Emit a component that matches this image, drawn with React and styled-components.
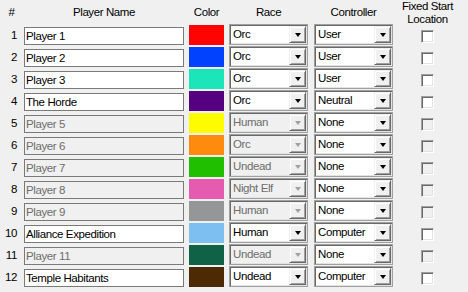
import React from "react";
import styled, { createGlobalStyle, css } from "styled-components";

const Global = createGlobalStyle`
  html, body { margin: 0; padding: 0; background: #f0f0f0; }
  body {
    font-family: "Liberation Sans", Arial, sans-serif;
    font-size: 11.5px;
    letter-spacing: -0.4px;
    color: #000;
  }
`;

const players = [
  { name: "Player 1", color: "#ff0303", race: "Orc", ctrl: "User", on: true },
  { name: "Player 2", color: "#0042ff", race: "Orc", ctrl: "User", on: true },
  { name: "Player 3", color: "#1ce6b9", race: "Orc", ctrl: "User", on: true },
  { name: "The Horde", color: "#540081", race: "Orc", ctrl: "Neutral", on: true },
  { name: "Player 5", color: "#fffc00", race: "Human", ctrl: "None", on: false },
  { name: "Player 6", color: "#fe8a0e", race: "Orc", ctrl: "None", on: false },
  { name: "Player 7", color: "#20c000", race: "Undead", ctrl: "None", on: false },
  { name: "Player 8", color: "#e55bb0", race: "Night Elf", ctrl: "None", on: false },
  { name: "Player 9", color: "#959697", race: "Human", ctrl: "None", on: false },
  { name: "Alliance Expedition", color: "#7ebff1", race: "Human", ctrl: "Computer", on: true },
  { name: "Player 11", color: "#106246", race: "Undead", ctrl: "None", on: false },
  { name: "Temple Habitants", color: "#4e2a04", race: "Undead", ctrl: "Computer", on: true },
];

const Panel = styled.div`
  width: 468px;
  height: 292px;
  display: flex;
  flex-direction: column;
  background: #f0f0f0;
`;

const grid = css`
  display: grid;
  grid-template-columns: 24px 165px 40px 85px 85px 57px;
`;

const HeaderRow = styled.div`
  ${grid};
  height: 24px;
  line-height: 13px;
`;

const HeadCell = styled.div`
  padding-top: ${(p) => (p.$twoLine ? 0 : 6)}px;
  text-align: center;
  width: ${(p) => p.$w}px;
  white-space: nowrap;
`;

const Row = styled.div`
  ${grid};
  height: 22px;
  align-items: start;
`;

const Num = styled.div`
  padding-right: 7px;
  text-align: right;
  line-height: 18px;
  margin-top: 2px;
`;

const TextBox = styled.div`
  box-sizing: border-box;
  width: 160px;
  height: 18px;
  margin-top: 3px;
  border: 1px solid #7a7a7a;
  background: ${(p) => (p.$on ? "#fff" : "#f0f0f0")};
  color: ${(p) => (p.$on ? "#000" : "#6d6d6d")};
  padding-left: 1px;
  line-height: 16px;
  white-space: nowrap;
  overflow: hidden;
`;

const Swatch = styled.div`
  width: 35px;
  height: 20px;
  margin-top: 1px;
`;

const Combo = styled.div`
  box-sizing: border-box;
  width: 79px;
  height: 21px;
  display: flex;
  align-items: center;
  border: 1px solid #a0a0a0;
  box-shadow: inset 1px 1px 0 #696969, inset -1px -1px 0 #e3e3e3;
  background: ${(p) => (p.$on ? "#fff" : "#f0f0f0")};
  color: ${(p) => (p.$on ? "#000" : "#6d6d6d")};
  padding: 1px;
`;

const ComboText = styled.div`
  flex: 1;
  padding-left: 2px;
  line-height: 17px;
  white-space: nowrap;
  overflow: hidden;
`;

const DropButton = styled.div`
  box-sizing: border-box;
  width: 17px;
  height: 17px;
  background: #f0f0f0;
  border-style: solid;
  border-width: 1px;
  border-color: #f0f0f0 #696969 #696969 #f0f0f0;
  box-shadow: inset 1px 1px 0 #fff, inset -1px -1px 0 #a0a0a0;
  display: flex;
  align-items: center;
  justify-content: center;
`;

const Arrow = styled.div`
  width: 0;
  height: 0;
  border-left: 3.5px solid transparent;
  border-right: 3.5px solid transparent;
  border-top: 4px solid ${(p) => (p.$on ? "#000" : "#a0a0a0")};
`;

const CheckCell = styled.div`
  display: flex;
  justify-content: center;
  padding-top: 6px;
`;

const CheckBox = styled.div`
  box-sizing: border-box;
  width: 13px;
  height: 13px;
  border-style: solid;
  border-width: 1px;
  border-color: #a0a0a0 #fff #fff #a0a0a0;
  box-shadow: inset 1px 1px 0 #696969, inset -1px -1px 0 #e3e3e3;
  background: ${(p) => (p.$on ? "#fff" : "#f0f0f0")};
`;

function ComboBox({ value, on }) {
  return (
    <Combo $on={on}>
      <ComboText>{value}</ComboText>
      <DropButton>
        <Arrow $on={on} />
      </DropButton>
    </Combo>
  );
}

export default function App() {
  return (
    <>
      <Global />
      <Panel>
        <HeaderRow>
          <HeadCell $w={23}>#</HeadCell>
          <HeadCell $w={160}>Player Name</HeadCell>
          <HeadCell $w={35}>Color</HeadCell>
          <HeadCell $w={79}>Race</HeadCell>
          <HeadCell $w={79}>Controller</HeadCell>
          <HeadCell $w={57} $twoLine>
            Fixed Start
            <br />
            Location
          </HeadCell>
        </HeaderRow>
        {players.map((p, i) => (
          <Row key={i}>
            <Num>{i + 1}</Num>
            <TextBox $on={p.on}>{p.name}</TextBox>
            <Swatch style={{ background: p.color }} />
            <ComboBox value={p.race} on={p.on} />
            <ComboBox value={p.ctrl} on={true} />
            <CheckCell>
              <CheckBox $on={p.on} />
            </CheckCell>
          </Row>
        ))}
      </Panel>
    </>
  );
}
